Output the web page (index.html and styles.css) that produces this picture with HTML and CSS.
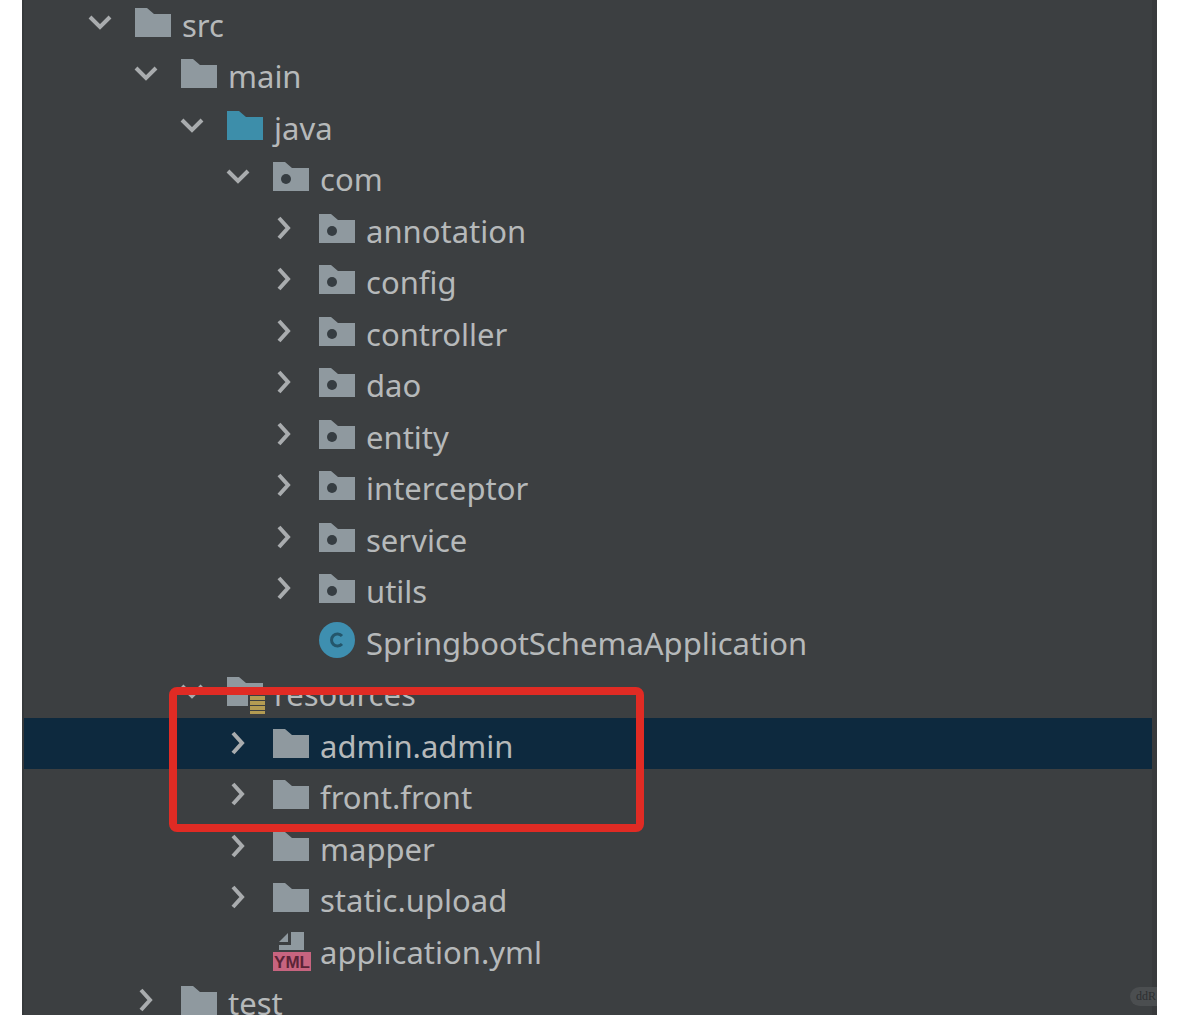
FILE: index.html
```html
<!DOCTYPE html>
<html lang="en">
<head>
<meta charset="utf-8">
<meta name="viewport" content="width=device-width, initial-scale=1">
<title>Project tree</title>
<link rel="stylesheet" href="styles.css">
</head>
<body>
<svg class="defs" aria-hidden="true">
  <symbol id="down" viewBox="0 0 24 40"><path class="stroke" d="M2 15l10 10 10-10"/></symbol>
  <symbol id="right" viewBox="0 0 24 40"><path class="stroke" d="M7 10l9 10-9 10"/></symbol>
  <symbol id="folder" viewBox="0 0 40 40"><path d="M0 6h12l7 6h17v23H0z"/></symbol>
  <symbol id="package" viewBox="0 0 40 40"><path d="M0 6h12l7 6h17v23H0z"/><circle class="hole" cx="13" cy="23" r="5"/></symbol>
  <symbol id="resources" viewBox="0 0 40 40"><path d="M0 6h12l7 6h17v11H21v12H0z"/><path class="gold" d="M23 25h15v4H23zM23 30h15v4H23zM23 35h15v4H23zM23 40h15v3H23z"/></symbol>
  <symbol id="class" viewBox="0 0 40 40"><circle class="disc" cx="18" cy="20" r="18"/><path class="letter" d="M23 16a6 6 0 1 0 0 8"/></symbol>
</svg>
<main class="panel">
  <ul class="tree" aria-label="Project files">
    <li class="row l0"><button class="toggle" aria-label="Collapse src"><svg><use href="#down"/></svg></button><svg class="icon"><use href="#folder"/></svg><span class="name">src</span></li>
    <li class="row l1"><button class="toggle" aria-label="Collapse main"><svg><use href="#down"/></svg></button><svg class="icon"><use href="#folder"/></svg><span class="name">main</span></li>
    <li class="row l2"><button class="toggle" aria-label="Collapse java"><svg><use href="#down"/></svg></button><svg class="icon source"><use href="#folder"/></svg><span class="name">java</span></li>
    <li class="row l3"><button class="toggle" aria-label="Collapse com"><svg><use href="#down"/></svg></button><svg class="icon"><use href="#package"/></svg><span class="name">com</span></li>
    <li class="row l4"><button class="toggle" aria-label="Expand annotation"><svg><use href="#right"/></svg></button><svg class="icon"><use href="#package"/></svg><span class="name">annotation</span></li>
    <li class="row l4"><button class="toggle" aria-label="Expand config"><svg><use href="#right"/></svg></button><svg class="icon"><use href="#package"/></svg><span class="name">config</span></li>
    <li class="row l4"><button class="toggle" aria-label="Expand controller"><svg><use href="#right"/></svg></button><svg class="icon"><use href="#package"/></svg><span class="name">controller</span></li>
    <li class="row l4"><button class="toggle" aria-label="Expand dao"><svg><use href="#right"/></svg></button><svg class="icon"><use href="#package"/></svg><span class="name">dao</span></li>
    <li class="row l4"><button class="toggle" aria-label="Expand entity"><svg><use href="#right"/></svg></button><svg class="icon"><use href="#package"/></svg><span class="name">entity</span></li>
    <li class="row l4"><button class="toggle" aria-label="Expand interceptor"><svg><use href="#right"/></svg></button><svg class="icon"><use href="#package"/></svg><span class="name">interceptor</span></li>
    <li class="row l4"><button class="toggle" aria-label="Expand service"><svg><use href="#right"/></svg></button><svg class="icon"><use href="#package"/></svg><span class="name">service</span></li>
    <li class="row l4"><button class="toggle" aria-label="Expand utils"><svg><use href="#right"/></svg></button><svg class="icon"><use href="#package"/></svg><span class="name">utils</span></li>
    <li class="row l4 leaf"><svg class="icon"><use href="#class"/></svg><span class="name">SpringbootSchemaApplication</span></li>
    <li class="row l2 marked"><button class="toggle" aria-label="Collapse resources"><svg><use href="#down"/></svg></button><svg class="icon"><use href="#resources"/></svg><span class="name">resources</span><div class="highlight"></div></li>
    <li class="row l3 selected"><button class="toggle" aria-label="Expand admin.admin"><svg><use href="#right"/></svg></button><svg class="icon"><use href="#folder"/></svg><span class="name">admin.admin</span></li>
    <li class="row l3"><button class="toggle" aria-label="Expand front.front"><svg><use href="#right"/></svg></button><svg class="icon"><use href="#folder"/></svg><span class="name">front.front</span></li>
    <li class="row l3"><button class="toggle" aria-label="Expand mapper"><svg><use href="#right"/></svg></button><svg class="icon"><use href="#folder"/></svg><span class="name">mapper</span></li>
    <li class="row l3"><button class="toggle" aria-label="Expand static.upload"><svg><use href="#right"/></svg></button><svg class="icon"><use href="#folder"/></svg><span class="name">static.upload</span></li>
    <li class="row l3 leaf"><svg class="icon" viewBox="0 0 40 40"><path d="M18 3h13v18H6v-5h12z"/><path d="M6 13L15 4v9z"/><path class="band" d="M0 23h38v19H0z"/><text class="tag" x="19" y="39" text-anchor="middle">YML</text></svg><span class="name">application.yml</span></li>
    <li class="row l1"><button class="toggle" aria-label="Expand test"><svg><use href="#right"/></svg></button><svg class="icon"><use href="#folder"/></svg><span class="name">test</span></li>
  </ul>
  <span class="watermark">ddR</span>
</main>
</body>
</html>
```
FILE: styles.css
```css
* {
  box-sizing: border-box;
}

body {
  margin: 0;
  background: #fff;
  font-family: "Noto Sans", "Open Sans", sans-serif;
}

.defs {
  position: absolute;
  width: 0;
  height: 0;
}

.panel {
  position: relative;
  height: 100vh;
  margin: 0 22px;
  padding: 0 5px 0 2px;
  overflow: hidden;
  background: #3c3f41;
  box-shadow: inset 2px 0 #36393b, inset -5px 0 #383a3c;
}

.tree {
  margin: -3px 0 0;
  padding: 0;
  list-style: none;
}

.row {
  display: flex;
  align-items: flex-start;
  height: 51px;
  padding-top: 5px;
  padding-left: calc(64px + var(--level) * 46px);
  color: #b6b9ba;
}

.row:nth-child(even) {
  height: 52px;
}

.l0 { --level: 0; }
.l1 { --level: 1; }
.l2 { --level: 2; }
.l3 { --level: 3; }
.l4 { --level: 4; }

.leaf {
  padding-left: calc(111px + var(--level) * 46px);
}

.selected {
  background: #0d293e;
}

.toggle {
  width: 24px;
  height: 40px;
  margin-right: 23px;
  padding: 0;
  border: 0;
  background: none;
}

.toggle svg {
  display: block;
  width: 24px;
  height: 40px;
}

.icon {
  flex: none;
  width: 40px;
  height: 40px;
  margin-right: 7px;
  overflow: visible;
  fill: #8f999f;
}

symbol {
  overflow: visible;
}

.source {
  fill: #3d8eaa;
}

.stroke {
  fill: none;
  stroke: #a9acae;
  stroke-width: 4;
}

.hole {
  fill: #363d42;
}

.gold {
  fill: #b39b52;
}

.disc {
  fill: #3e8fb0;
}

.letter {
  fill: none;
  stroke: #24566b;
  stroke-width: 3;
}

.band {
  fill: #c7647f;
}

.tag {
  fill: #5a2437;
  font: bold 17px "Liberation Sans", sans-serif;
}

.name {
  padding-top: 3px;
  font-size: 31px;
  line-height: 40px;
  white-space: nowrap;
}

.marked {
  position: relative;
}

.highlight {
  position: absolute;
  z-index: 1;
  top: 21px;
  left: 145px;
  width: 475px;
  height: 145px;
  border: 8px solid #e02b24;
  border-radius: 8px;
}

.watermark {
  position: absolute;
  right: 0;
  bottom: 9px;
  width: 27px;
  padding-left: 6px;
  border-radius: 10px 0 0 10px;
  background: #4b4e50;
  color: #2c2f31;
  font: 12px/19px "Liberation Serif", serif;
}
```
